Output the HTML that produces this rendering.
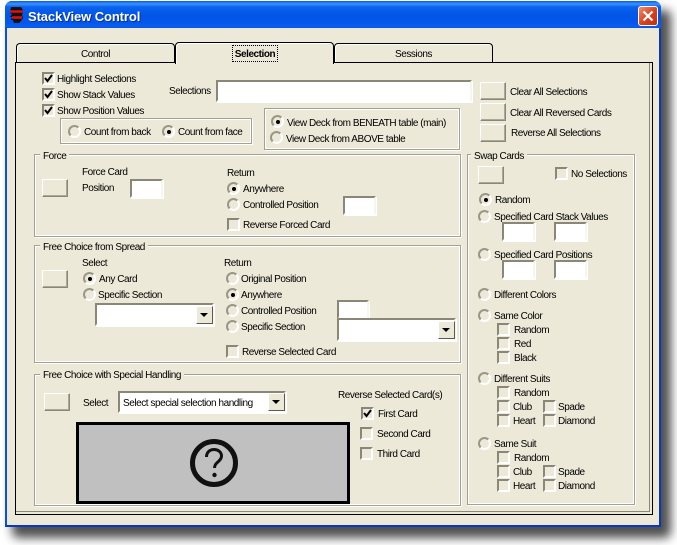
<!DOCTYPE html>
<html><head><meta charset="utf-8"><style>
html,body{margin:0;padding:0;background:#fff}
body{width:677px;height:545px;position:relative;overflow:hidden;font-family:"Liberation Sans",sans-serif;font-size:10px;letter-spacing:-.45px;color:#000}
div,span{position:absolute;box-sizing:border-box}
.t{white-space:nowrap;line-height:12px;height:12px;margin-top:2px}
.g{border:1px solid #a3a194;box-shadow:0 0 0 1px #fff inset,1px 1px 0 #fff}
.l{background:#ece9d8;padding:0 3px;white-space:nowrap;line-height:14px;height:12px;margin-top:1px}
.b{width:26px;height:18px;background:#ece9d8;border:1px solid;border-color:#fff #8a8778 #8a8778 #fff;box-shadow:-1px -1px 0 #aca899 inset}
.i{background:#fff;border:2px solid;border-color:#8a8778 #f6f5ee #fff #8a8778;box-shadow:1px 1px 0 #fff}
.c{width:13px;height:13px;border:2px solid;border-color:#8a8778 #fff #fff #8a8778;background:#ece9d8}
.c.on svg{position:absolute;left:0;top:0}
.r{width:13px;height:13px;border-radius:50%;border:2px solid;border-color:#9a9788 #fff #fff #9a9788;background:#ece9d8}
.r.on::after{content:"";position:absolute;left:2.5px;top:2.5px;width:4px;height:4px;border-radius:50%;background:#000}
.a{background:#ece9d8;border:1px solid;border-color:#fff #5c5a50 #5c5a50 #fff;width:17px;height:18px}
.a::after{content:"";position:absolute;left:3px;top:6px;border:4px solid transparent;border-top:4px solid #000;border-bottom:0}
.tab{background:#ece9d8;border:1px solid #000;border-bottom:0;border-radius:4px 4px 0 0;box-shadow:1px 1px 0 #fff inset;text-align:center;line-height:22px}
</style></head><body>
<div style="left:12px;top:10px;width:659px;height:528px;background:#505050;filter:blur(5px);border-radius:6px"></div>
<div style="left:5px;top:1px;width:656px;height:526px;background:#0846dc;border-radius:7px 7px 0 0;border:2px solid #0a4fe4;border-top:0;border-right-color:#0838b8;border-bottom-color:#0838c4"></div>
<div style="left:5px;top:1px;width:656px;height:28px;border-radius:7px 7px 0 0;background:linear-gradient(#0a5be8 0,#3a93ff 3px,#0a62ee 6px,#0256e6 14px,#0357ea 22px,#0a5ff0 26px,#0243cc 28px)"></div>
<div style="left:7px;top:28px;width:652px;height:497px;background:#ece9d8"></div>
<svg style="position:absolute;left:9px;top:6px" width="16" height="18" viewBox="0 0 16 18"><path d="M2 1h10l2 3v2l-1 3 1 3-2 3-2 2H5l-1-3H2l1-3H1l2-3-2-1z" fill="#111"/><path d="M1 5.500h13M3 11.500h10" stroke="#e01010" stroke-width="2.500"/></svg>
<div class="t" style="left:28px;top:9px;height:15px;line-height:15px;font-size:13px;font-weight:bold;letter-spacing:-.1px;color:#fff;text-shadow:1px 1px 0 #0a2f9c;margin-top:0">StackView Control</div>
<div style="left:638px;top:6px;width:20px;height:20px;border:1px solid #fff;border-radius:3px;background:linear-gradient(135deg,#f09070,#d8401c 55%,#c03010)"><svg style="position:absolute;left:3px;top:3px" width="12" height="12"><path d="M1.500 1.500l9 9M10.500 1.500l-9 9" stroke="#fff" stroke-width="2.200"/></svg></div>

<div class="tab" style="left:16px;top:43px;width:159px;height:20px">Control</div>
<div class="tab" style="left:334px;top:43px;width:159px;height:20px">Sessions</div>
<div style="left:15px;top:62px;width:638px;height:453px;background:#ece9d8;border:1px solid #000;box-shadow:-2px -2px 0 #ece9d8 inset,-3px -3px 0 #8a8778 inset"></div>
<div class="tab" style="left:175px;top:42px;width:159px;height:22px;z-index:2;font-weight:bold"><span style="left:56px;top:2px;width:46px;height:17px;line-height:19px;outline:1px dotted #000;outline-offset:-1px">Selection</span></div>

<div class="c on" style="left:42px;top:72px"><svg width="9" height="9"><path d="M1 4l2.500 3L8 1" fill="none" stroke="#000" stroke-width="2"/></svg></div>
<div class="t" style="left:57px;top:72px">Highlight Selections</div>
<div class="c on" style="left:42px;top:88px"><svg width="9" height="9"><path d="M1 4l2.500 3L8 1" fill="none" stroke="#000" stroke-width="2"/></svg></div>
<div class="t" style="left:57px;top:88px">Show Stack Values</div>
<div class="c on" style="left:42px;top:104px"><svg width="9" height="9"><path d="M1 4l2.500 3L8 1" fill="none" stroke="#000" stroke-width="2"/></svg></div>
<div class="t" style="left:57px;top:104px">Show Position Values</div>
<div class="t" style="left:169px;top:84px">Selections</div>
<div class="i" style="left:216px;top:80px;width:256px;height:22px"></div>

<div class="g" style="left:60px;top:118px;width:192px;height:26px"></div>
<div class="r" style="left:68px;top:125px"></div><div class="t" style="left:84px;top:125px">Count from back</div>
<div class="r on" style="left:162px;top:125px"></div><div class="t" style="left:178px;top:125px">Count from face</div>

<div class="g" style="left:264px;top:108px;width:196px;height:42px"></div>
<div class="r on" style="left:271px;top:115px"></div><div class="t" style="left:287px;top:116px">View Deck from BENEATH table (main)</div>
<div class="r" style="left:270px;top:131px"></div><div class="t" style="left:286px;top:132px">View Deck from ABOVE table</div>

<div class="b" style="left:480px;top:82px"></div><div class="t" style="left:510px;top:85px">Clear All Selections</div>
<div class="b" style="left:480px;top:103px"></div><div class="t" style="left:510px;top:106px">Clear All Reversed Cards</div>
<div class="b" style="left:480px;top:124px"></div><div class="t" style="left:511px;top:126px">Reverse All Selections</div>

<div class="g" style="left:34px;top:154px;width:427px;height:83px"></div>
<div class="l" style="left:40px;top:149px">Force</div>
<div class="b" style="left:42px;top:179px"></div>
<div class="t" style="left:82px;top:165px">Force Card</div>
<div class="t" style="left:82px;top:181px">Position</div>
<div class="i" style="left:130px;top:179px;width:33px;height:19px"></div>
<div class="t" style="left:227px;top:166px">Return</div>
<div class="r on" style="left:227px;top:182px"></div><div class="t" style="left:243px;top:182px">Anywhere</div>
<div class="r" style="left:227px;top:198px"></div><div class="t" style="left:243px;top:198px">Controlled Position</div>
<div class="i" style="left:343px;top:196px;width:33px;height:19px"></div>
<div class="c" style="left:227px;top:218px"></div><div class="t" style="left:243px;top:218px">Reverse Forced Card</div>

<div class="g" style="left:34px;top:245px;width:427px;height:118px"></div>
<div class="l" style="left:40px;top:240px">Free Choice from Spread</div>
<div class="b" style="left:42px;top:270px"></div>
<div class="t" style="left:82px;top:256px">Select</div>
<div class="r on" style="left:83px;top:272px"></div><div class="t" style="left:99px;top:272px">Any Card</div>
<div class="r" style="left:83px;top:288px"></div><div class="t" style="left:98px;top:288px">Specific Section</div>
<div class="i" style="left:95px;top:303px;width:119px;height:23px"></div><div class="a" style="left:196px;top:306px"></div>
<div class="t" style="left:224px;top:256px">Return</div>
<div class="r" style="left:226px;top:272px"></div><div class="t" style="left:241px;top:272px">Original Position</div>
<div class="r on" style="left:226px;top:288px"></div><div class="t" style="left:241px;top:288px">Anywhere</div>
<div class="r" style="left:226px;top:304px"></div><div class="t" style="left:241px;top:304px">Controlled Position</div>
<div class="r" style="left:226px;top:320px"></div><div class="t" style="left:241px;top:320px">Specific Section</div>
<div class="i" style="left:337px;top:300px;width:32px;height:19px"></div>
<div class="i" style="left:337px;top:318px;width:119px;height:23px"></div><div class="a" style="left:438px;top:321px"></div>
<div class="c" style="left:226px;top:345px"></div><div class="t" style="left:242px;top:345px">Reverse Selected Card</div>

<div class="g" style="left:34px;top:374px;width:427px;height:132px"></div>
<div class="l" style="left:40px;top:368px">Free Choice with Special Handling</div>
<div class="b" style="left:44px;top:393px"></div>
<div class="t" style="left:83px;top:396px">Select</div>
<div class="i" style="left:118px;top:391px;width:168px;height:22px"></div><div class="a" style="left:268px;top:393px"></div>
<div class="t" style="left:123px;top:396px">Select special selection handling</div>
<div style="left:76px;top:422px;width:274px;height:82px;background:#c0c0c0;border:3px solid #000"></div>
<svg style="position:absolute;left:188px;top:437px" width="52" height="52" viewBox="0 0 52 52"><circle cx="26" cy="26" r="21.500" fill="none" stroke="#111" stroke-width="5"/><path d="M18.500 20c0-5 3.500-7.500 7.500-7.500s7.500 2.500 7.500 6.500c0 5.500-7 6-7 12" fill="none" stroke="#111" stroke-width="3"/><circle cx="26.500" cy="38" r="2.200" fill="#111"/></svg>
<div class="t" style="left:338px;top:388px">Reverse Selected Card(s)</div>
<div class="c on" style="left:361px;top:407px"><svg width="9" height="9"><path d="M1 4l2.500 3L8 1" fill="none" stroke="#000" stroke-width="2"/></svg></div><div class="t" style="left:378px;top:407px">First Card</div>
<div class="c" style="left:360px;top:427px"></div><div class="t" style="left:377px;top:427px">Second Card</div>
<div class="c" style="left:360px;top:447px"></div><div class="t" style="left:377px;top:447px">Third Card</div>

<div class="g" style="left:467px;top:154px;width:168px;height:351px"></div>
<div class="l" style="left:471px;top:149px">Swap Cards</div>
<div class="b" style="left:478px;top:166px"></div>
<div class="c" style="left:555px;top:167px"></div><div class="t" style="left:571px;top:167px">No Selections</div>
<div class="r on" style="left:479px;top:193px"></div><div class="t" style="left:495px;top:193px">Random</div>
<div class="r" style="left:478px;top:210px"></div><div class="t" style="left:494px;top:210px">Specified Card Stack Values</div>
<div class="i" style="left:502px;top:222px;width:33px;height:19px"></div><div class="i" style="left:554px;top:222px;width:33px;height:19px"></div>
<div class="r" style="left:478px;top:248px"></div><div class="t" style="left:494px;top:248px">Specified Card Positions</div>
<div class="i" style="left:502px;top:260px;width:33px;height:19px"></div><div class="i" style="left:554px;top:260px;width:33px;height:19px"></div>
<div class="r" style="left:478px;top:288px"></div><div class="t" style="left:494px;top:288px">Different Colors</div>
<div class="r" style="left:478px;top:309px"></div><div class="t" style="left:494px;top:309px">Same Color</div>
<div class="c" style="left:497px;top:323px"></div><div class="t" style="left:514px;top:323px">Random</div>
<div class="c" style="left:497px;top:337px"></div><div class="t" style="left:514px;top:337px">Red</div>
<div class="c" style="left:497px;top:351px"></div><div class="t" style="left:514px;top:351px">Black</div>
<div class="r" style="left:478px;top:372px"></div><div class="t" style="left:494px;top:372px">Different Suits</div>
<div class="c" style="left:497px;top:386px"></div><div class="t" style="left:514px;top:386px">Random</div>
<div class="c" style="left:497px;top:400px"></div><div class="t" style="left:513px;top:400px">Club</div>
<div class="c" style="left:543px;top:400px"></div><div class="t" style="left:558px;top:400px">Spade</div>
<div class="c" style="left:497px;top:414px"></div><div class="t" style="left:513px;top:414px">Heart</div>
<div class="c" style="left:543px;top:414px"></div><div class="t" style="left:558px;top:414px">Diamond</div>
<div class="r" style="left:478px;top:437px"></div><div class="t" style="left:494px;top:437px">Same Suit</div>
<div class="c" style="left:497px;top:451px"></div><div class="t" style="left:514px;top:451px">Random</div>
<div class="c" style="left:497px;top:465px"></div><div class="t" style="left:513px;top:465px">Club</div>
<div class="c" style="left:543px;top:465px"></div><div class="t" style="left:558px;top:465px">Spade</div>
<div class="c" style="left:497px;top:479px"></div><div class="t" style="left:513px;top:479px">Heart</div>
<div class="c" style="left:543px;top:479px"></div><div class="t" style="left:558px;top:479px">Diamond</div>
</body></html>
